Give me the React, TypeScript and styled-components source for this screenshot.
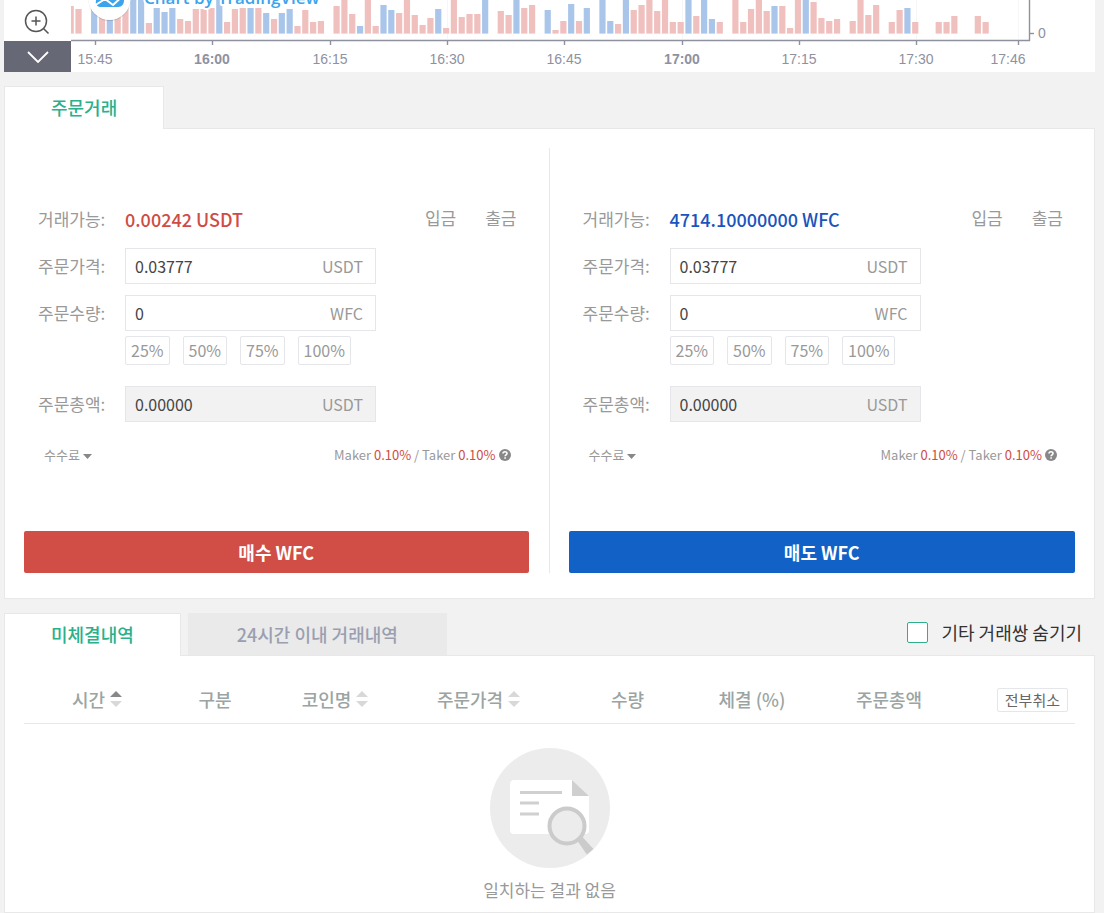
import React from "react";
import styled, { createGlobalStyle } from "styled-components";

const GlobalStyle = createGlobalStyle`
  * { box-sizing: border-box; }
  body {
    margin: 0;
    background: #f2f2f2;
    color: #999;
    font-family: "Noto Sans CJK KR", "Noto Sans", sans-serif;
    font-size: 17px;
    line-height: 24px;
  }
  button, input { font: inherit; color: inherit; }
`;

const Page = styled.main`
  padding: 0 9px 0 4px;
`;

/* ---------- chart ---------- */

const ChartStrip = styled.section`
  display: flex;
  height: 72px;
  background: #fff;
  overflow: hidden;
`;

const ChartTools = styled.div`
  display: flex;
  flex-direction: column;
  width: 67px;
  flex: none;
`;

const ToolButton = styled.button<{ $dark?: boolean }>`
  display: flex;
  align-items: center;
  justify-content: center;
  width: 100%;
  height: ${(p) => (p.$dark ? "31px" : "41px")};
  padding: ${(p) => (p.$dark ? "0" : "3px 2px 0 0")};
  border: 0;
  background: ${(p) => (p.$dark ? "#666876" : "transparent")};
`;

const Plot = styled.svg`
  display: block;
  flex: none;
  width: 1024px;
  height: 73px;
`;

const AxisText = styled.text<{ $bold?: boolean }>`
  font-family: "Liberation Sans", Arial, sans-serif;
  font-size: 14px;
  font-weight: ${(p) => (p.$bold ? 700 : 400)};
  fill: #8f919f;
`;

const BrandText = styled.text`
  font-family: "Open Sans", "Noto Sans", sans-serif;
  font-size: 17px;
  font-weight: 600;
  fill: #3ba4ec;
  stroke: #fff;
  stroke-width: 4px;
  stroke-linejoin: round;
  paint-order: stroke;
`;

/* One entry per minute from 15:42: p = pink, b = blue, number = top of the bar, - = no trades. */
const BARS =
  "p6 p9 - b0 p4 b15 p15 p5 b0 b0 p23 b8 b12 b8 p19 p21 p9 p9 p8 b0 p22 p9 p8 b8 p8 b13 p19 b13 b9 p26 p10 p22 p21 - p6 p0 p14 b26 p0 p26 b5 b10 p13 p0 p15 p25 p18 b9 p28 p0 p17 p14 p14 b0 - p11 p15 b0 p8 p5 - b10 p30 p21 b4 p21 b8 - b0 b21 p24 b0 p10 p5 p0 p11 p0 p22 p22 b0 p16 b0 b19 p22 - p0 p22 p9 p0 p11 b6 p6 p28 p0 b0 p2 p18 p21 p19 - p21 p0 p15 p5 - p22 p10 b8 p22 - - p22 p22 p16 - - p16 p22".split(
    " "
  );

/* Minutes with a bar start at x = -2.6 and follow at this pitch. */
const BAR_PITCH = 7.82;

const TICKS = [
  { x: 24, label: "15:45" },
  { x: 141, label: "16:00", bold: true },
  { x: 259, label: "16:15" },
  { x: 376, label: "16:30" },
  { x: 493, label: "16:45" },
  { x: 611, label: "17:00", bold: true },
  { x: 728, label: "17:15" },
  { x: 845, label: "17:30" },
  { x: 947, label: "17:46", textX: 937 },
];

function VolumeChart() {
  return (
    <Plot viewBox="0 0 1024 73" role="img" aria-label="Volume">
      <path d="M376.5 0V39M611.5 0V39M845.5 0V39M947.5 0V39" stroke="#f6f6f8" />
      {BARS.map((bar, i) => {
        if (bar === "-") return null;
        const top = Number(bar.slice(1));
        const x = Math.max(0, -3.4 + i * BAR_PITCH);
        const right = 2.8 + i * BAR_PITCH;
        return (
          <rect
            key={i}
            x={x}
            y={top}
            width={right - x}
            height={33.6 - top}
            fill={bar[0] === "p" ? "#efc0be" : "#a9c6ea"}
          />
        );
      })}
      <path d="M0 40.5H958.500V0" fill="none" stroke="#8f919f" strokeWidth="1.4" />
      <path d="M959 33.5H963" stroke="#8f919f" strokeWidth="1.4" />
      {TICKS.map((t) => (
        <g key={t.label}>
          <path d={`M${t.x + 0.5} 41V45`} stroke="#8f919f" strokeWidth="1.4" />
          <AxisText x={t.textX ?? t.x} y="64" textAnchor="middle" $bold={t.bold}>
            {t.label}
          </AxisText>
        </g>
      ))}
      <AxisText x="967" y="38">
        0
      </AxisText>
      <circle cx="38.5" cy="0" r="21" fill="#000" opacity="0.14" />
      <circle cx="38.5" cy="-1" r="21" fill="#fff" />
      <path
        d="M25 1C25 -4 28 -9 34 -9H46C51 -9 53 -5 53 0C53 4 51 7 47 7H29C26 7 24 4 25 1Z"
        fill="#3ba4ec"
      />
      <path d="M23 6L34 -1L42 5L54 -6" fill="none" stroke="#fff" strokeWidth="2" />
      <BrandText x="73" y="4">
        Chart by TradingView
      </BrandText>
    </Plot>
  );
}

/* ---------- tabs and panels ---------- */

const TabBar = styled.div`
  display: flex;
  align-items: flex-start;
  gap: 7px;
  height: 42px;
  margin-top: 14px;
`;

const Tab = styled.button<{ $active?: boolean; $wide?: boolean }>`
  position: relative;
  z-index: 1;
  height: ${(p) => (p.$active ? "43px" : "42px")};
  min-width: ${(p) => (p.$wide ? "259px" : "160px")};
  padding: 0 46px 2px;
  border: 1px solid ${(p) => (p.$active ? "#e8e8e8" : "#eaeaea")};
  border-bottom: 0;
  background: ${(p) => (p.$active ? "#fff" : "#eaeaea")};
  color: ${(p) => (p.$active ? "#2bb08a" : "#9a9fb0")};
  font-size: 18px;
  font-weight: 500;
`;

const HideOthers = styled.label`
  display: flex;
  align-items: center;
  gap: 13px;
  margin-left: auto;
  padding: 7px 13px 0 0;
  color: #333;
  font-size: 18px;
`;

const CheckBox = styled.input`
  && {
    -webkit-appearance: none;
    appearance: none;
    width: 21px;
    height: 21px;
    margin: 0;
    border: 1px solid #2fae8b;
    border-radius: 2px;
    background: #fff;
  }
`;

const Panel = styled.section`
  border: 1px solid #e8e8e8;
  background: #fff;
`;

const OrderPanel = styled(Panel)`
  display: grid;
  grid-template-columns: 1fr 1fr;
  padding: 19px 19px 25px;
`;

/* ---------- order form ---------- */

const Form = styled.form<{ $side: "buy" | "sell" }>`
  display: flex;
  flex-direction: column;
  padding: ${(p) => (p.$side === "buy" ? "53px 20px 0 0" : "53px 0 0 19px")};
  border-right: ${(p) => (p.$side === "buy" ? "1px solid #e8e8e8" : "0")};
`;

const FormRow = styled.div<{ $gap?: number }>`
  display: flex;
  align-items: center;
  min-height: 36px;
  margin-top: ${(p) => p.$gap ?? 0}px;
  padding: 0 12px 0 14px;
`;

const Caption = styled.label`
  flex: none;
  width: 87px;
`;

const Balance = styled.output<{ $color: string }>`
  flex: 1;
  color: ${(p) => p.$color};
  font-size: 18px;
  font-weight: 500;
`;

const TransferLinks = styled.nav`
  display: flex;
  gap: 29px;
  padding-bottom: 3px;
`;

const TransferLink = styled.a`
  color: inherit;
  text-decoration: none;
`;

const Field = styled.div<{ $locked?: boolean }>`
  display: flex;
  align-items: center;
  width: 251px;
  height: 36px;
  padding: 0 12px 1px 9px;
  border: 1px solid #e4e6ea;
  background: ${(p) => (p.$locked ? "#f2f2f2" : "#fff")};
  font-size: 16px;
`;

const Value = styled.input`
  flex: 1;
  min-width: 0;
  padding: 0;
  border: 0;
  outline: 0;
  background: transparent;
  color: #444;
`;

const Shares = styled.div`
  display: flex;
  gap: 13px;
  margin: 5px 0 0 101px;
`;

const Share = styled.button`
  height: 29px;
  padding: 0 5px 2px;
  border: 1px solid #e4e6ea;
  border-radius: 2px;
  background: #fff;
  font-size: 16px;
  line-height: 24px;
`;

const FeeRow = styled.div`
  display: flex;
  align-items: center;
  justify-content: space-between;
  margin-top: 21px;
  padding: 0 18px 0 20px;
  font-size: 13px;
`;

const FeeToggle = styled.button`
  display: flex;
  align-items: center;
  gap: 3px;
  padding: 0;
  border: 0;
  background: none;
`;

const Rates = styled.span`
  display: flex;
  align-items: center;
  gap: 3px;
`;

const Rate = styled.span`
  color: #cf4c44;
`;

const Submit = styled.button<{ $color: string }>`
  height: 42px;
  margin-top: 64px;
  border: 0;
  border-radius: 2px;
  background: ${(p) => p.$color};
  color: #fff;
  font-size: 18px;
  font-weight: 700;
`;

interface OrderProps {
  side: "buy" | "sell";
  balance: string;
  textColor: string;
  buttonColor: string;
  action: string;
}

function OrderForm({ side, balance, textColor, buttonColor, action }: OrderProps) {
  return (
    <Form $side={side} onSubmit={(e) => e.preventDefault()}>
      <FormRow>
        <Caption htmlFor={`${side}-balance`}>거래가능:</Caption>
        <Balance id={`${side}-balance`} $color={textColor}>
          {balance}
        </Balance>
        <TransferLinks>
          <TransferLink href="#deposit">입금</TransferLink>
          <TransferLink href="#withdraw">출금</TransferLink>
        </TransferLinks>
      </FormRow>
      <FormRow $gap={11}>
        <Caption htmlFor={`${side}-price`}>주문가격:</Caption>
        <Field>
          <Value id={`${side}-price`} defaultValue="0.03777" />
          USDT
        </Field>
      </FormRow>
      <FormRow $gap={11}>
        <Caption htmlFor={`${side}-amount`}>주문수량:</Caption>
        <Field>
          <Value id={`${side}-amount`} defaultValue="0" />
          WFC
        </Field>
      </FormRow>
      <Shares>
        {["25%", "50%", "75%", "100%"].map((s) => (
          <Share key={s} type="button">
            {s}
          </Share>
        ))}
      </Shares>
      <FormRow $gap={21}>
        <Caption htmlFor={`${side}-total`}>주문총액:</Caption>
        <Field $locked>
          <Value id={`${side}-total`} defaultValue="0.00000" readOnly />
          USDT
        </Field>
      </FormRow>
      <FeeRow>
        <FeeToggle type="button">
          수수료
          <svg width="9" height="10" viewBox="0 0 9 10">
            <path d="M0 4H9L4.5 9Z" fill="#888" />
          </svg>
        </FeeToggle>
        <Rates>
          <span>
            Maker <Rate>0.10%</Rate> / Taker <Rate>0.10%</Rate>
          </span>
          <svg width="12" height="12" viewBox="0 0 12 12">
            <circle cx="6" cy="6" r="6" fill="#888" />
            <path
              d="M4 4.6C4 2.2 8 2.2 8 4.5C8 5.8 6.1 5.8 6.1 7.2M6.1 8.2V9.7"
              fill="none"
              stroke="#fff"
              strokeWidth="1.6"
            />
          </svg>
        </Rates>
      </FeeRow>
      <Submit $color={buttonColor}>{action}</Submit>
    </Form>
  );
}

/* ---------- open orders ---------- */

const OrdersPanel = styled(Panel)`
  padding: 19px 19px 10px;
`;

const Table = styled.table`
  width: 100%;
  table-layout: fixed;
  border-collapse: collapse;
`;

const Head = styled.th<{ $end?: boolean }>`
  height: 48px;
  padding: ${(p) => (p.$end ? "0 7px 0 0" : "0")};
  border-bottom: 1px solid #e8e8e8;
  color: #9aa5a3;
  font-size: 18px;
  font-weight: 500;
  text-align: ${(p) => (p.$end ? "right" : "center")};
  white-space: nowrap;
`;

const HeadContent = styled.span`
  display: inline-flex;
  align-items: center;
  gap: 5px;
`;

const CancelAll = styled.button`
  height: 24px;
  padding: 0 7px;
  border: 1px solid #e4e6ea;
  border-radius: 2px;
  background: #fff;
  color: #666;
  font-size: 15px;
  font-weight: 400;
  line-height: 20px;
`;

const Empty = styled.td`
  padding: 24px 0 0;
  text-align: center;
`;

const EmptyArt = styled.svg`
  display: block;
  margin: 0 auto 10px;
`;

const COLUMNS: { label: string; width: number; sort?: "up" | "none" }[] = [
  { label: "시간", width: 146, sort: "up" },
  { label: "구분", width: 90 },
  { label: "코인명", width: 150, sort: "none" },
  { label: "주문가격", width: 137, sort: "none" },
  { label: "수량", width: 161 },
  { label: "체결 (%)", width: 88 },
  { label: "주문총액", width: 186 },
];

function SortArrows({ up }: { up: boolean }) {
  return (
    <svg width="12" height="18" viewBox="0 0 12 18">
      <path d="M0 7L6 1L12 7Z" fill={up ? "#888" : "#d8d8d8"} />
      <path d="M0 11L6 17L12 11Z" fill="#d8d8d8" />
    </svg>
  );
}

export default function App() {
  return (
    <>
      <GlobalStyle />
      <Page>
        <ChartStrip>
          <ChartTools>
            <ToolButton aria-label="Zoom in">
              <svg width="26" height="26" viewBox="0 0 26 26" fill="none" stroke="#555" strokeWidth="1.5">
                <circle cx="12" cy="12" r="10.5" />
                <path d="M12 7.5V16.5M7.5 12H16.5M19.5 19.5L24.500 24.500" />
              </svg>
            </ToolButton>
            <ToolButton $dark aria-label="Collapse chart">
              <svg width="22" height="12" viewBox="0 0 22 12" fill="none" stroke="#fff" strokeWidth="1.8">
                <path d="M1 1L11 11L21 1" />
              </svg>
            </ToolButton>
          </ChartTools>
          <VolumeChart />
        </ChartStrip>

        <TabBar>
          <Tab $active>주문거래</Tab>
        </TabBar>
        <OrderPanel>
          <OrderForm
            side="buy"
            balance="0.00242 USDT"
            textColor="#cf4c44"
            buttonColor="#d04e45"
            action="매수 WFC"
          />
          <OrderForm
            side="sell"
            balance="4714.10000000 WFC"
            textColor="#1a54bd"
            buttonColor="#1161c6"
            action="매도 WFC"
          />
        </OrderPanel>

        <TabBar>
          <Tab $active>미체결내역</Tab>
          <Tab $wide>24시간 이내 거래내역</Tab>
          <HideOthers>
            <CheckBox type="checkbox" />
            기타 거래쌍 숨기기
          </HideOthers>
        </TabBar>
        <OrdersPanel>
          <Table>
            <colgroup>
              {COLUMNS.map((c) => (
                <col key={c.label} width={c.width} />
              ))}
              <col width={93} />
            </colgroup>
            <thead>
              <tr>
                {COLUMNS.map((c) => (
                  <Head key={c.label} scope="col">
                    <HeadContent>
                      {c.label}
                      {c.sort && <SortArrows up={c.sort === "up"} />}
                    </HeadContent>
                  </Head>
                ))}
                <Head $end scope="col">
                  <CancelAll>전부취소</CancelAll>
                </Head>
              </tr>
            </thead>
            <tbody>
              <tr>
                <Empty colSpan={8}>
                  <EmptyArt width="120" height="120" viewBox="0 0 120 120">
                    <circle cx="60" cy="60" r="60" fill="#ececec" />
                    <path
                      d="M24 32H82L99 48V82Q99 86 95 86H24Q20 86 20 82V36Q20 32 24 32Z"
                      fill="#fff"
                    />
                    <path d="M82 32L99 48H82Z" fill="#cfcfcf" />
                    <path d="M30 44.500H72M30 55H49M30 66H49" stroke="#d0d0d0" strokeWidth="3" />
                    <path d="M88 92L92 90L102 101L97 105Z" fill="#cbcbcb" stroke="#cbcbcb" strokeWidth="2" />
                    <circle cx="77" cy="78" r="17.500" fill="#ececec" stroke="#cbcbcb" strokeWidth="4" />
                  </EmptyArt>
                  일치하는 결과 없음
                </Empty>
              </tr>
            </tbody>
          </Table>
        </OrdersPanel>
      </Page>
    </>
  );
}
